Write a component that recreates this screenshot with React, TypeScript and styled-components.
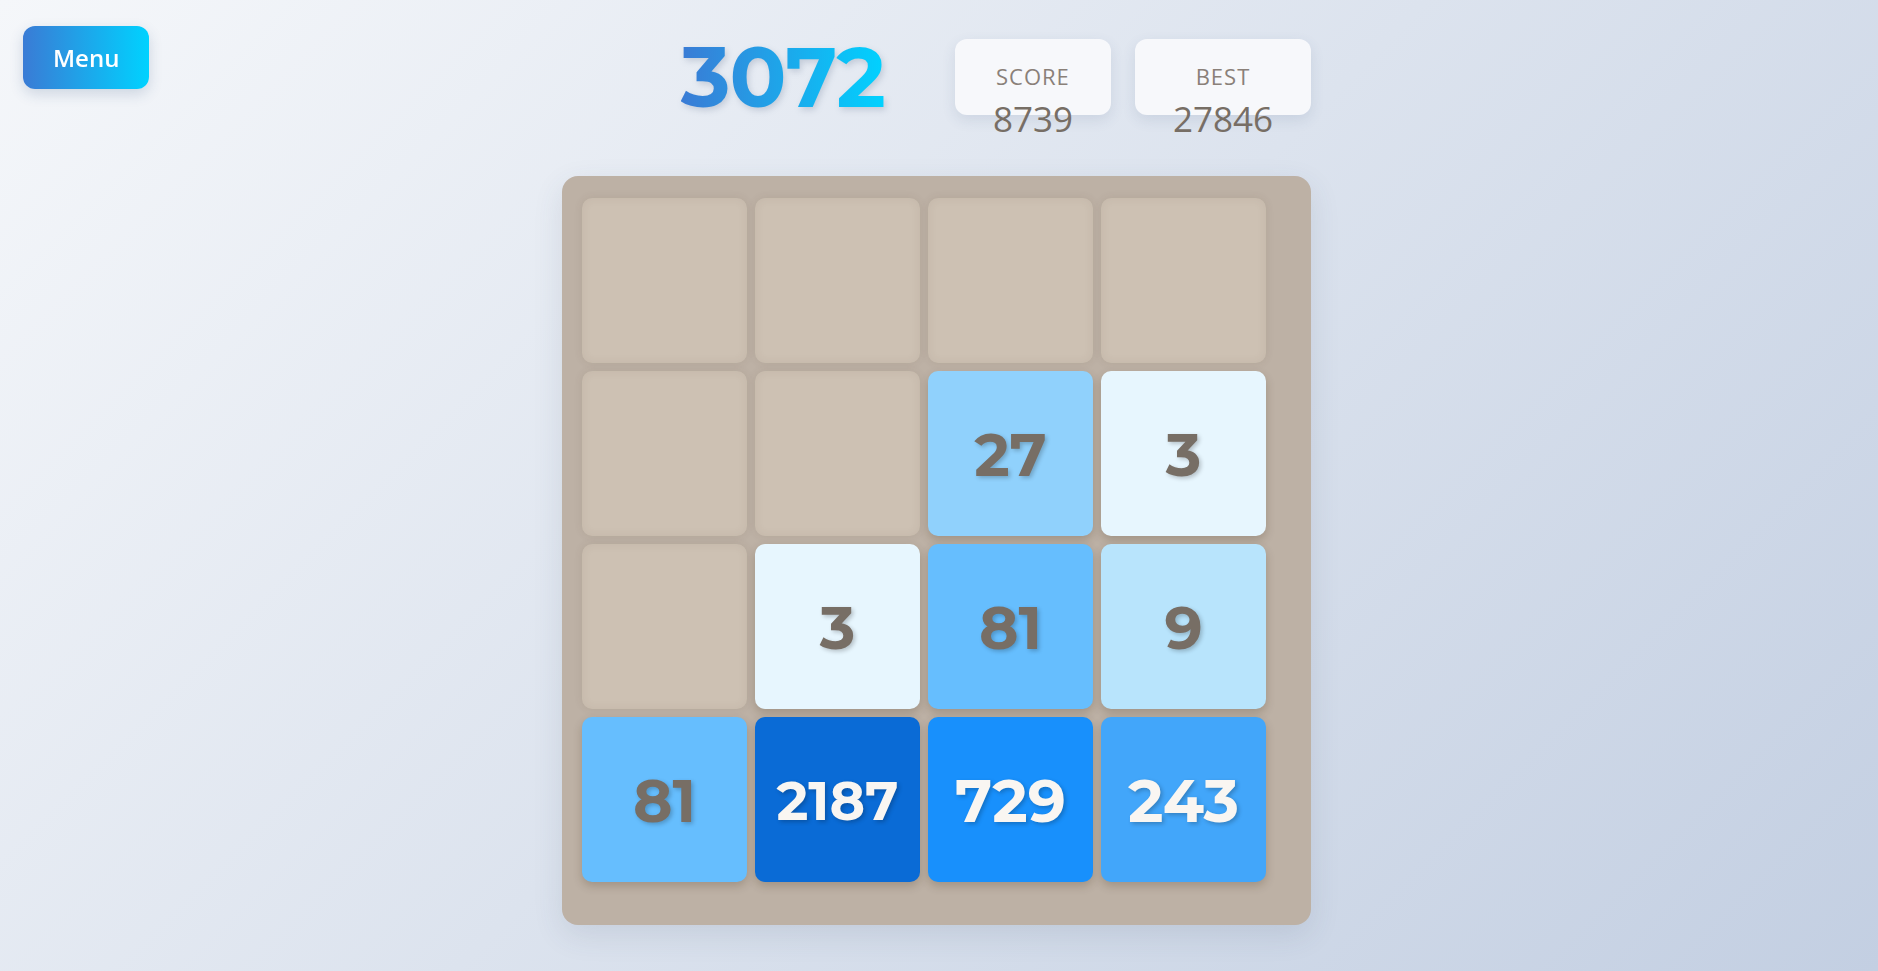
import React from "react";
import styled, { createGlobalStyle } from "styled-components";

const GlobalStyle = createGlobalStyle`
  * { box-sizing: border-box; }
  html, body { margin: 0; padding: 0; }
  body {
    min-height: 100vh;
    background: linear-gradient(135deg, #f5f7fa 0%, #c3cfe2 100%);
    font-family: "Open Sans", "Liberation Sans", sans-serif;
    overflow: hidden;
  }
`;

const Page = styled.div`
  min-height: 100vh;
  display: flex;
  flex-direction: column;
  align-items: center;
  padding: 39px 5px 0 0;
`;

const MenuButton = styled.button`
  position: fixed;
  top: 26px;
  left: 23px;
  height: 63px;
  padding: 0 30px;
  border: none;
  border-radius: 12px;
  background: linear-gradient(90deg, #3a7bd5 0%, #00d2ff 100%);
  color: #ffffff;
  font-family: "Open Sans", "Liberation Sans", sans-serif;
  font-weight: 600;
  font-size: 24px;
  box-shadow: 0 5px 14px rgba(40, 70, 120, 0.18);
  cursor: pointer;
`;

const Header = styled.header`
  width: 749px;
  height: 76px;
  display: flex;
  justify-content: flex-end;
  align-items: center;
  gap: 70px;
`;

const Title = styled.h1`
  margin: 0;
  font-family: Montserrat, Inter, "Open Sans", sans-serif;
  font-weight: 700;
  font-size: 84px;
  line-height: 1;
  letter-spacing: -1px;
  background: linear-gradient(90deg, #3a7bd5 0%, #00d2ff 100%);
  -webkit-background-clip: text;
  background-clip: text;
  color: transparent;
  filter: drop-shadow(2px 3px 3px rgba(40, 60, 100, 0.18));
`;

const ScoreGroup = styled.div`
  display: flex;
  gap: 24px;
`;

const ScoreBox = styled.div`
  height: 76px;
  padding: 22px 38px 0;
  border-radius: 12px;
  background: #f7f8fb;
  box-shadow: 0 5px 14px rgba(60, 80, 120, 0.12);
  display: flex;
  flex-direction: column;
  align-items: center;
`;

const ScoreLabel = styled.div`
  font-size: 22px;
  font-weight: 500;
  letter-spacing: 1px;
  line-height: 30px;
  color: #8a8079;
`;

const ScoreValue = styled.div`
  margin-top: 4px;
  font-size: 35px;
  font-weight: 500;
  line-height: 48px;
  color: #776e65;
`;

const Board = styled.div`
  margin-top: 61px;
  width: 749px;
  height: 749px;
  padding: 22px 20px;
  border-radius: 16px;
  background: #bdb1a5;
  box-shadow: 0 10px 30px rgba(60, 70, 100, 0.12);
  display: grid;
  grid-template-columns: repeat(4, 165px);
  grid-auto-rows: 165px;
  gap: 8px;
  align-content: start;
`;

const EmptyCell = styled.div`
  border-radius: 10px;
  background: #cdc1b3;
  box-shadow: 0 0 8px rgba(90, 70, 50, 0.1), inset 0 0 10px rgba(90, 70, 50, 0.08);
`;

const Tile = styled.div<{ $bg: string; $light: boolean; $size: number }>`
  border-radius: 10px;
  background: ${(p) => p.$bg};
  box-shadow: 0 4px 10px rgba(60, 40, 20, 0.22);
  display: flex;
  align-items: center;
  justify-content: center;
  font-family: Montserrat, Inter, "Open Sans", sans-serif;
  font-weight: 700;
  font-size: ${(p) => p.$size}px;
  color: ${(p) => (p.$light ? "#f9f6f2" : "#776e65")};
  text-shadow: 2px 2px 4px rgba(0, 0, 0, 0.22);
  padding-top: 2px;
`;

const tileStyle: Record<number, { bg: string; light: boolean }> = {
  3: { bg: "#e7f6fe", light: false },
  9: { bg: "#b8e4fc", light: false },
  27: { bg: "#90d1fc", light: false },
  81: { bg: "#66befe", light: false },
  243: { bg: "#42a6fa", light: true },
  729: { bg: "#1890fc", light: true },
  2187: { bg: "#0a6bd6", light: true },
};

const grid: number[][] = [
  [0, 0, 0, 0],
  [0, 0, 27, 3],
  [0, 3, 81, 9],
  [81, 2187, 729, 243],
];

export default function App() {
  return (
    <>
      <GlobalStyle />
      <MenuButton>Menu</MenuButton>
      <Page>
        <Header>
          <Title>3072</Title>
          <ScoreGroup>
            <ScoreBox>
              <ScoreLabel>SCORE</ScoreLabel>
              <ScoreValue>8739</ScoreValue>
            </ScoreBox>
            <ScoreBox>
              <ScoreLabel>BEST</ScoreLabel>
              <ScoreValue>27846</ScoreValue>
            </ScoreBox>
          </ScoreGroup>
        </Header>
        <Board>
          {grid.flat().map((v, i) => {
            if (!v) return <EmptyCell key={i} />;
            const s = tileStyle[v];
            const size = String(v).length >= 4 ? 54 : 60;
            return (
              <Tile key={i} $bg={s.bg} $light={s.light} $size={size}>
                {v}
              </Tile>
            );
          })}
        </Board>
      </Page>
    </>
  );
}
